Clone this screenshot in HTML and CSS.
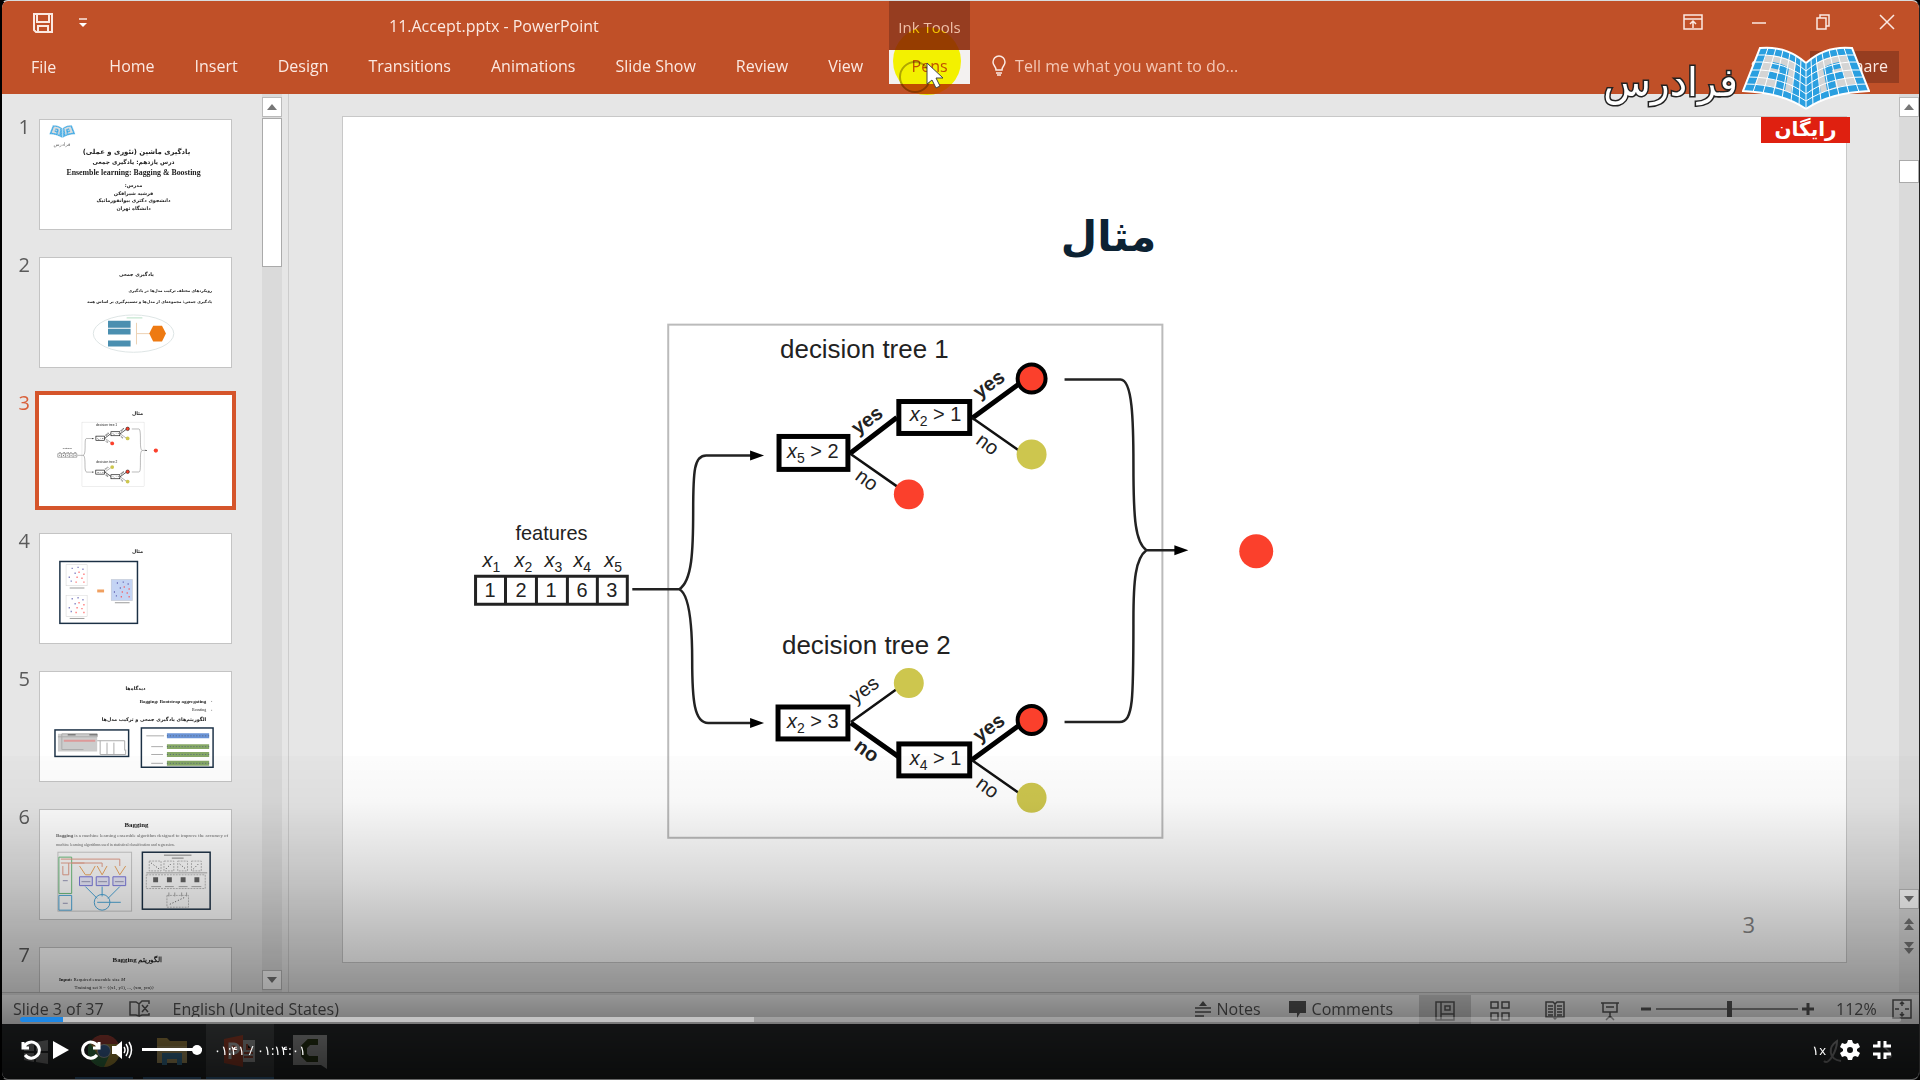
FILE: index.html
```html
<!DOCTYPE html>
<html lang="en">
<head>
<meta charset="utf-8">
<title>11.Accept.pptx - PowerPoint</title>
<link rel="stylesheet" href="styles.css">
</head>
<body>
<svg class="defs" aria-hidden="true">
  <symbol id="page" viewBox="0 0 64 66">
    <path class="pg-blue" d="M18 2C38 0 54 8 64 17V63C48 52 25 46 1 45Z"/>
    <path class="pg-grey" d="M24 9C36 9 46 12 54 17L49 47C38 42 26 39 13 38Z"/>
    <path class="pg-blue" d="M31 16C37 17 43 19 47 22L43 44L34 41L35 35L25 32L27 25L37 28L38 24L29 22Z"/>
    <path class="pg-line" d="M15 9C36 8 53 15 64 25M12 16C34 15 52 23 64 32M10 24C32 23 51 30 64 40M7 31C29 31 50 37 64 48M4 38C27 38 49 45 64 55M26 2L11 46M34 2L21 47M41 4L31 49M48 7L40 52M54 10L49 55M59 13L57 59"/>
    <path class="pg-edge" d="M64 17C54 8 38 0 18 2L1 45C25 46 48 52 64 63"/>
  </symbol>
  <symbol id="book" viewBox="0 0 128 66">
    <use href="#page" width="64" height="66"/>
    <use href="#page" width="64" height="66" transform="translate(128 0) scale(-1 1)"/>
    <path class="pg-line" d="M64 17V63"/>
  </symbol>
  <symbol id="scatter" viewBox="0 0 22 22">
    <rect class="plot" x="0" y="0" width="22" height="22"/>
    <path class="dots blue" d="M6 4h1M12 3h1M17 5h1M9 9h1M3 13h1M5 17h1"/>
    <path class="dots pink" d="M13 8h1M18 10h1M11 13h1M16 14h1M10 18h1M18 18h1"/>
  </symbol>
</svg>

<main class="player">
  <header class="ribbon">
    <div class="titlebar">
      <div class="quick">
        <button aria-label="Save"><svg width="20" height="22" viewBox="0 0 20 22"><path class="ln2" d="M1 2H19V20H3L1 18ZM4 2V10H16V2M5 20V14H15V20"/></svg></button>
        <button aria-label="Customize"><svg width="10" height="12" viewBox="0 0 10 12"><path class="ln" d="M1 2H9"/><path class="fl" d="M1 6H9L5 10Z"/></svg></button>
      </div>
      <div class="doc">11.Accept.pptx - PowerPoint</div>
      <div class="ink">Ink Tools</div>
      <div class="window">
        <button aria-label="Ribbon display"><svg width="20" height="16" viewBox="0 0 20 16"><path class="ln" d="M1 1H19V15H1ZM1 5H19M10 14V7M7 10L10 7L13 10"/></svg></button>
        <button aria-label="Minimize"><svg width="16" height="16" viewBox="0 0 16 16"><path class="ln" d="M1 9H15"/></svg></button>
        <button aria-label="Restore"><svg width="16" height="16" viewBox="0 0 16 16"><path class="ln" d="M2 4H11V15H2ZM5 4V1H14V12H11"/></svg></button>
        <button aria-label="Close"><svg width="16" height="16" viewBox="0 0 16 16"><path class="ln" d="M1 1L15 15M15 1L1 15"/></svg></button>
      </div>
    </div>
    <nav class="tabs">
      <button class="file">File</button><button>Home</button><button>Insert</button><button>Design</button><button>Transitions</button><button>Animations</button><button>Slide Show</button><button>Review</button><button>View</button>
      <div class="pens">
        <button class="active">Pens</button>
        <span class="halo"></span>
        <svg class="cursor" width="20" height="28" viewBox="0 0 20 28"><path d="M1 1V22L6 18L10 26L14 24L10 16H17Z"/></svg>
      </div>
      <button class="tell"><svg width="16" height="22" viewBox="0 0 16 22"><path class="ln" d="M5 15C5 11 2 11 2 7A6 6 0 0 1 14 7C14 11 11 11 11 15ZM5 18H11M6 20H10"/></svg>Tell me what you want to do...</button>
      <div class="account"><a href="#">Sign in</a><button class="share">Share</button></div>
    </nav>
  </header>

  <section class="workspace">
    <ol class="thumbs">
      <li><span>1</span><svg viewBox="0 0 192 111">
        <use href="#book" x="8" y="5" width="27" height="14"/>
        <text class="fa mid grey" x="21" y="26" font-size="5">فرادرس</text>
        <g class="fa mid b"><text x="97" y="35" font-size="7">یادگیری ماشین (تئوری و عملی)</text><text x="94" y="45" font-size="6">درس یازدهم: یادگیری جمعی</text></g>
        <text class="serif mid b" x="94" y="56" font-size="8">Ensemble learning: Bagging &amp; Boosting</text>
        <g class="fa mid b" font-size="5"><text x="94" y="68">مدرس:</text><text x="94" y="76">فرشید شیرافکن</text><text x="94" y="84">دانشجوی دکتری بیوانفورماتیک</text><text x="94" y="92">دانشگاه تهران</text></g>
      </svg></li>
      <li><span>2</span><svg viewBox="0 0 192 111">
        <text class="fa mid b" x="97" y="18" font-size="5">یادگیری جمعی</text>
        <text class="fa b" x="174" y="35" font-size="4">رویکردهای مختلف ترکیب مدل‌ها در یادگیری</text>
        <text class="fa b" x="174" y="46" font-size="4">یادگیری جمعی: مجموعه‌ای از مدل‌ها و تصمیم‌گیری بر اساس همه</text>
        <ellipse cx="94" cy="77" rx="41" ry="19" fill="none" stroke="#dde4e4"/>
        <path fill="#4a8fb0" d="M68 64h23v7h-23zM68 72h23v6h-23zM68 84h23v6h-23z"/>
        <path stroke="#edd0b0" fill="none" d="M97 66V88M97 77H110"/>
        <path fill="#ee7a12" d="M110 77L114 69H123L127 77L123 85H114Z"/>
        <path stroke="#b6dfc4" d="M87 61h16"/>
      </svg></li>
      <li class="current"><span>3</span><svg viewBox="0 0 192 111">
        <text class="fa mid b" x="98" y="19" font-size="5">مثال</text>
        <g transform="scale(0.1277)"><use href="#forest"/></g>
      </svg></li>
      <li><span>4</span><svg viewBox="0 0 192 111">
        <text class="fa mid b" x="98" y="19" font-size="5">مثال</text>
        <rect class="dark" x="19" y="28" width="79" height="63"/>
        <use href="#scatter" x="25" y="31" width="22" height="22"/><use href="#scatter" x="25" y="62" width="22" height="22"/>
        <rect x="71" y="46" width="22" height="22" fill="#c4d4f4"/><use href="#scatter" x="71" y="46" width="22" height="22"/>
        <path stroke="#f0a060" stroke-width="3" d="M57 58h7"/><path stroke="#999" d="M29 55h15M29 86h15M75 70h15"/>
      </svg></li>
      <li><span>5</span><svg viewBox="0 0 192 111">
        <text class="fa mid b" x="96" y="18" font-size="5">دیدگاه‌ها</text>
        <text class="serif end b" x="168" y="32" font-size="5">Bagging: Bootstrap aggregating</text>
        <text class="serif end" x="168" y="40" font-size="4">Boosting</text>
        <text class="fa b" x="168" y="50" font-size="5">الگوریتم‌های یادگیری جمعی و ترکیب مدل‌ها</text>
        <path stroke="#999" d="M173 30h1M173 39h1"/>
        <rect class="dark" x="14" y="59" width="75" height="27"/>
        <path stroke="#ccc" stroke-width="18" d="M17 72h40"/><path stroke="#d99" stroke-width="2" d="M23 70h32"/><path stroke="#aaa" fill="none" d="M17 66h40v-3h-36v16h22M57 70h28v10M60 70v14h26v-5M67 72v12M74 72v12"/><path stroke="#555" d="M27 64h8M49 64h8"/>
        <rect class="dark" x="102" y="57" width="73" height="40"/>
        <path stroke="#6a93d6" stroke-width="5" d="M128 65h43"/><path stroke="#86a866" stroke-width="5" d="M128 76h43M128 84h43M128 93h43"/>
        <path stroke="#aaa" d="M107 65h18M112 76h12M112 84h12M112 93h12"/><path stroke="#567" stroke-dasharray="1 2" d="M128 65h43M128 76h43M128 84h43M128 93h43"/>
      </svg></li>
      <li><span>6</span><svg viewBox="0 0 192 111">
        <text class="serif mid b" x="97" y="17" font-size="7">Bagging</text>
        <text class="serif grey" x="15" y="28" font-size="5"><tspan class="b">Bagging</tspan> is a machine learning ensemble algorithm designed to improve the accuracy of</text>
        <text class="serif grey" x="15" y="37" font-size="4">machine learning algorithms used in statistical classification and regression.</text>
        <rect x="17" y="43" width="75" height="60" fill="none" stroke="#ccc"/>
        <path stroke="#6cbf7c" fill="none" d="M18 48h13v37h-13z"/><path stroke="#4aa8dc" fill="none" d="M18 87h13v15h-13zM45 78L57 90M62 78V88M80 78L68 90"/><circle cx="62" cy="94" r="8" fill="none" stroke="#4aa8dc"/>
        <path stroke="#e8a08c" fill="none" d="M20 50H80V57M20 54H62V58M22 57v9h6v-12M31 54h13"/><path stroke="#f0a860" fill="none" d="M39 57l6 9h5l5-9M57 57l5 9l5-9M75 57l5 9l6-9"/>
        <path stroke="#7a78e0" stroke-width="1" fill="#eef" d="M39 68h13v9h-13zM56 68h13v9h-13zM73 68h13v9h-13z"/><path stroke="#99b" d="M41 73h9M58 73h9M75 73h9M22 72h5M22 95h5"/><path stroke="#4aa8dc" d="M57 94h24"/>
        <rect class="dark" x="103" y="43" width="69" height="58"/>
        <path stroke="#888" d="M125 46h28M133 49h12"/><path stroke="#bbb" fill="none" stroke-dasharray="2 1" d="M110 52h12v10h-12zM125 52h10v10h-10zM139 52h10v10h-10zM153 52h10v10h-10zM128 87h22v12h-22zM107 66h60v14h-60z"/>
        <path stroke="#666" stroke-width="5" stroke-dasharray="5 9" d="M114 71h50"/><path stroke="#aaa" d="M107 64h62M112 78h10M126 78h9M140 78h9M153 78h10M130 84v4M136 84v4M143 84v4M148 84v4"/>
        <path stroke="#555" stroke-dasharray="1 2" d="M112 54l8 6M127 60l6-6M141 55l6 5M155 60l6-6M131 96l15-7"/>
      </svg></li>
      <li><span>7</span><svg viewBox="0 0 192 111">
        <text class="serif mid b" x="98" y="14" font-size="7">Bagging الگوریتم</text>
        <text class="serif" x="18" y="34" font-size="5"><tspan class="b">Input:</tspan> Required ensemble size <tspan class="var">M</tspan></text>
        <text class="serif" x="34" y="42" font-size="5">Training set S = {(x1, y1), ..., (xm, ym)}</text>
      </svg></li>
    </ol>
    <div class="bar left"><i class="up"></i><b></b><i class="down"></i></div>
    <div class="canvas">
      <article class="slide">
        <h1>مثال</h1>
        <svg class="forest" viewBox="0 0 1504 846" role="img" aria-label="Two decision trees combined">
          <g id="forest"><g transform="translate(-343 -116)">
            <rect class="frame" x="668" y="324" width="495" height="514"/>
            <text class="t26" x="780" y="357">decision tree 1</text>
            <text class="t26" x="782" y="654">decision tree 2</text>
            <text class="t20" x="515" y="540">features</text>
            <g class="t20">
              <text x="482" y="567"><tspan class="var">x</tspan><tspan class="sub" dy="5">1</tspan></text>
              <text x="514" y="567"><tspan class="var">x</tspan><tspan class="sub" dy="5">2</tspan></text>
              <text x="544" y="567"><tspan class="var">x</tspan><tspan class="sub" dy="5">3</tspan></text>
              <text x="573" y="567"><tspan class="var">x</tspan><tspan class="sub" dy="5">4</tspan></text>
              <text x="604" y="567"><tspan class="var">x</tspan><tspan class="sub" dy="5">5</tspan></text>
              <text x="484" y="597">1</text><text x="515" y="597">2</text><text x="545" y="597">1</text><text x="576" y="597">6</text><text x="606" y="597">3</text>
            </g>
            <path class="cells" d="M475 576H627V604H475ZM505 576V604M536 576V604M567 576V604M597 576V604"/>
            <path class="flow" d="M632 589H679C692 581 693 550 693 510C693 470 694 455 706 455H752M679 589C689 594 692 625 692 660C692 700 694 723 708 723H752"/>
            <path class="flow" d="M1065 379H1121C1133 379 1134 420 1134 465C1134 520 1136 542 1147 550H1178M1065 722H1120C1134 722 1134 700 1134 620C1134 580 1136 558 1147 550"/>
            <path d="M750 450L764 455L750 460ZM750 718L764 723L750 728ZM1175 545L1189 550L1175 555Z"/>
            <path class="thick" d="M850 453L897 417M972 418L1020 383M851 723L899 757M972 760L1020 725"/>
            <path class="thin" d="M850 453L900 488M972 417L1022 452M851 722L897 689M972 760L1022 795"/>
            <rect class="box" x="779" y="436" width="69" height="33"/>
            <rect class="box" x="899" y="401" width="71" height="32"/>
            <rect class="box" x="778" y="707" width="70" height="32"/>
            <rect class="box" x="899" y="744" width="71" height="32"/>
            <g class="t20">
              <text x="787" y="458"><tspan class="var">x</tspan><tspan class="sub" dy="5">5</tspan><tspan dy="-5"> &gt; 2</tspan></text>
              <text x="910" y="421"><tspan class="var">x</tspan><tspan class="sub" dy="5">2</tspan><tspan dy="-5"> &gt; 1</tspan></text>
              <text x="787" y="728"><tspan class="var">x</tspan><tspan class="sub" dy="5">2</tspan><tspan dy="-5"> &gt; 3</tspan></text>
              <text x="910" y="765"><tspan class="var">x</tspan><tspan class="sub" dy="5">4</tspan><tspan dy="-5"> &gt; 1</tspan></text>
            </g>
            <g class="t20 mid">
              <text class="b" transform="translate(871 425) rotate(-36)">yes</text>
              <text class="b" transform="translate(993 389) rotate(-36)">yes</text>
              <text transform="translate(863 485) rotate(36)">no</text>
              <text transform="translate(984 449) rotate(36)">no</text>
              <text transform="translate(868 695) rotate(-36)">yes</text>
              <text class="b" transform="translate(863 756) rotate(36)">no</text>
              <text class="b" transform="translate(993 733) rotate(-36)">yes</text>
              <text transform="translate(984 793) rotate(36)">no</text>
            </g>
            <circle class="red ring" cx="1032" cy="378" r="14"/>
            <circle class="red ring" cx="1032" cy="720" r="14"/>
            <circle class="olive" cx="1032" cy="454" r="15"/>
            <circle class="olive" cx="1032" cy="798" r="15"/>
            <circle class="olive" cx="909" cy="683" r="15"/>
            <circle class="red" cx="909" cy="494" r="15"/>
            <circle class="red" cx="1257" cy="551" r="17"/>
          </g></g>
        </svg>
        <p>3</p>
      </article>
    </div>
    <div class="bar right"><i class="up"></i><b></b><i class="down"></i>
      <svg width="16" height="14" viewBox="0 0 16 14"><path d="M3 7L8 1L13 7ZM3 13L8 7L13 13Z"/></svg>
      <svg width="16" height="14" viewBox="0 0 16 14"><path d="M3 1L8 7L13 1ZM3 7L8 13L13 7Z"/></svg>
    </div>
  </section>

  <footer class="status">
    <span>Slide 3 of 37</span>
    <svg width="22" height="18" viewBox="0 0 22 18"><path d="M1 2H7L10 4V16L7 15H1ZM10 4L13 1H20V4M10 16L13 15H20V13M13 5L19 12M19 5L13 12"/></svg>
    <span class="lang">English (United States)</span>
    <button class="notes"><svg width="16" height="18" viewBox="0 0 16 18"><path class="solid" d="M4 6L8 1L12 6Z"/><path d="M0 8H16M0 12H16M0 16H9"/></svg>Notes</button>
    <button class="comments"><svg width="18" height="18" viewBox="0 0 18 18"><path class="solid" d="M0 1H17V13H11L8 18V13H0Z"/></svg>Comments</button>
    <div class="views">
      <button class="on" aria-label="Normal"><svg width="20" height="20" viewBox="0 0 20 20"><path d="M1 1H19V19H1ZM6 1V19M6 13H19M10 5H15V9H10Z"/></svg></button>
      <button aria-label="Slide sorter"><svg width="20" height="20" viewBox="0 0 20 20"><path d="M1 1H8V7H1ZM12 1H19V7H12ZM1 12H8V19H1ZM12 12H19V19H12Z"/></svg></button>
      <button aria-label="Reading view"><svg width="20" height="20" viewBox="0 0 20 20"><path d="M10 3L8 1H1V16H8L10 18L12 16H19V1H12ZM10 3V18M3 5H8M3 8H8M3 11H8M3 14H8M12 5H17M12 8H17M12 11H17M12 14H17"/></svg></button>
      <button aria-label="Slide show"><svg width="20" height="20" viewBox="0 0 20 20"><path d="M1 2H19M3 2V11H17V2M6 6H14M10 11V17M6 19L10 15L14 19"/></svg></button>
    </div>
    <div class="zoom">
      <button aria-label="Zoom out"><svg width="12" height="12" viewBox="0 0 12 12"><path class="heavy" d="M1 6H11"/></svg></button>
      <input type="range" aria-label="Zoom" min="0" max="100" value="52">
      <button aria-label="Zoom in"><svg width="12" height="12" viewBox="0 0 12 12"><path class="heavy" d="M0 6H12M6 0V12"/></svg></button>
      <span>112%</span>
      <button aria-label="Fit"><svg width="20" height="20" viewBox="0 0 20 20"><path d="M6 1H1V19H6M14 1H19V19H14M6 1H14M6 19H14M10 3V7M10 13V17M3 10H7M13 10H17M8 5L10 3L12 5M8 15L10 17L12 15"/></svg></button>
    </div>
  </footer>

  <div class="taskbar">
    <span class="win"><svg width="24" height="24" viewBox="0 0 24 24"><path fill="#999" d="M0 4L10 2V11H0ZM12 2L24 0V11H12ZM0 13H10V22L0 20ZM12 13H24V24L12 22Z"/></svg></span>
    <span class="run"><svg width="32" height="32" viewBox="0 0 32 32"><circle cx="16" cy="16" r="16" fill="#d6b440"/><path fill="#c0443a" d="M16 16L2 8A16 16 0 0 1 30 8L30 9H16Z"/><path fill="#3f9a56" d="M2 8A16 16 0 0 0 16 32L22 19L10 20Z"/><circle cx="16" cy="16" r="7" fill="#ddd"/><circle cx="16" cy="16" r="6" fill="#4b83cf"/></svg></span>
    <span class="run"><svg width="32" height="28" viewBox="0 0 32 28"><path fill="#c8a650" d="M1 1H11L14 4H31V26H1Z"/><path fill="#e2c67c" d="M1 9H31V26H1Z"/><path fill="#4899c8" d="M6 16H26V28H21V22H11V28H6Z"/></svg></span>
    <span class="run sel"><svg width="32" height="32" viewBox="0 0 32 32"><path fill="#c9c9c9" d="M17 5H31V27H17Z"/><path stroke="#b94a30" stroke-width="2" d="M20 18H29M20 22H29M23 9V14H28"/><path fill="#c34a2c" d="M0 4L19 0V32L0 28Z"/><path fill="none" stroke="#eee" stroke-width="3" d="M6 24V9H10A4 4 0 0 1 10 18H6"/></svg></span>
    <span class="cam"><svg width="34" height="34" viewBox="0 0 34 34"><path fill="#bbb" d="M0 0H34V34L28 30H0Z"/><path fill="none" stroke="#2b3b10" stroke-width="6" d="M25 7H16L11 12V20L15 24H25"/></svg></span>
    <span class="tray"><svg width="76" height="28" viewBox="0 0 76 28"><path d="M1 23C6 28 14 12 14 3C5 9 5 21 18 23M60 8C70 16 72 20 60 20"/></svg></span>
  </div>

  <div class="watermark">
    <div class="brand"><span>فرادرس</span><svg width="128" height="66" viewBox="0 0 128 66"><use href="#book" width="128" height="66"/></svg></div>
    <strong>رایگان</strong>
  </div>

  <div class="shade"></div>
  <div class="controls">
    <input class="seek" type="range" aria-label="Seek" min="0" max="4441" value="101">
    <div class="row">
      <button aria-label="Back"><svg width="20" height="20" viewBox="0 0 20 20"><path class="w" d="M2 2V8H8M3 7A8 8 0 1 1 4 15"/></svg></button>
      <button class="play" aria-label="Play"><svg width="18" height="20" viewBox="0 0 18 20"><path class="fl" d="M1 1L17 10L1 19Z"/></svg></button>
      <button aria-label="Forward"><svg width="20" height="20" viewBox="0 0 20 20"><path class="w" d="M18 2V8H12M17 7A8 8 0 1 0 16 15"/></svg></button>
      <button class="mute" aria-label="Mute"><svg width="22" height="20" viewBox="0 0 22 20"><path class="fl" d="M0 6H4L10 1V19L4 14H0Z"/><path class="w2" d="M12 7Q14 10 12 13M14 4Q18 10 14 16M17 2Q22 10 17 18"/></svg></button>
      <input class="volume" type="range" aria-label="Volume" value="100">
      <span class="time">۰۱:۴۱ / ۰۱:۱۴:۰۱</span>
      <span class="rate">۱x</span>
      <button class="gear" aria-label="Settings"><svg width="20" height="20" viewBox="0 0 20 20"><path class="fl" fill-rule="evenodd" d="M8 0H12L13 3L15 4L18 3L20 7L17 9V11L20 13L18 17L15 16L13 17L12 20H8L7 17L5 16L2 17L0 13L3 11V9L0 7L2 3L5 4L7 3ZM10 7A3 3 0 1 0 10 13A3 3 0 1 0 10 7Z"/></svg></button>
      <button aria-label="Exit full screen"><svg width="20" height="20" viewBox="0 0 20 20"><path class="w" d="M1 6H7V1M13 1V6H19M1 14H7V19M13 19V14H19"/></svg></button>
    </div>
  </div>
</main>
</body>
</html>
```
FILE: styles.css
```css
* { box-sizing: border-box; }
body { margin: 0; background: #000; font-family: "Open Sans", "Noto Sans", sans-serif; font-size: 16px; }
button { display: flex; align-items: center; justify-content: center; padding: 0; border: 0; background: none; color: inherit; font: inherit; white-space: nowrap; }
svg { display: block; flex: none; }
input[type="range"] { appearance: none; margin: 0; background: none; }
.defs { position: absolute; width: 0; height: 0; }

.player { position: relative; display: flex; flex-direction: column; height: 100vh; min-height: 600px; border: 1px solid #666; border-top-color: #d8dcde; border-right-color: #222; border-left: 2px solid #000; border-radius: 8px; overflow: hidden; background: #e6e6e6; }

/* ribbon */
.ribbon { flex: none; background: #c05028; color: #fbe9e2; }
.titlebar { display: flex; height: 49px; }
.quick { display: flex; align-items: center; gap: 25px; width: 387px; padding: 0 0 6px 31px; }
.doc { width: 500px; padding-top: 14px; line-height: 22px; }
.ink { width: 81px; padding-top: 16px; background: #963d20; color: #f0c0a8; text-align: center; font-size: 15px; line-height: 20px; }
.window { display: flex; align-items: center; gap: 48px; margin-left: auto; padding: 0 24px 8px 0; }
.ln { fill: none; stroke: #fbe9e2; stroke-width: 1.5; }
.ln2 { fill: none; stroke: #fbe9e2; stroke-width: 2; }
.fl { fill: #fff; }
.tabs { display: flex; height: 44px; padding-bottom: 10px; }
.tabs button { padding: 0 20px 2px; }
.tabs .file { padding: 0 33px 0 29px; }
.pens { position: relative; width: 81px; margin-left: 6px; }
.tabs .active { width: 100%; height: 34px; background: #f3f1f0; color: #c05028; }
.halo { position: absolute; left: 4px; top: -23px; width: 68px; height: 68px; border-radius: 50%; background: #ff0; mix-blend-mode: multiply; }
.halo::after { content: ""; position: absolute; left: 6px; top: 34px; width: 28px; height: 28px; border: 2px solid #b8b000; border-radius: 50%; }
.cursor { position: absolute; left: 37px; top: 12px; fill: #fff; stroke: #444; }
.tabs .tell { gap: 8px; padding: 0 21px 2px; color: #f4c8b6; }
.account { display: flex; align-items: center; margin-left: auto; padding-right: 20px; gap: 10px; }
.account a { color: inherit; text-decoration: none; }
.tabs .share { width: 89px; height: 32px; padding: 0 11px 2px; justify-content: flex-end; background: #963d20; }

/* workspace */
.workspace { display: flex; flex: 1; min-height: 0; border-bottom: 1px solid #bbb; }
.thumbs { display: flex; flex-direction: column; gap: 27px; width: 260px; margin: 0; padding: 25px 30px 0 0; list-style: none; overflow: hidden; color: #5a5a5a; font-size: 20px; line-height: 26px; }
.thumbs li { display: flex; gap: 9px; justify-content: flex-end; }
.thumbs span { margin-top: -5px; }
.thumbs svg { width: 193px; height: 111px; border: 1px solid #c4c4c4; background: #fff; }
.current { color: #d9603a; }
.thumbs .current svg { outline: 4px solid #d5552b; border-color: #fff; }
.bar { display: flex; flex-direction: column; flex: none; width: 20px; padding-top: 3px; background: #dadada; }
.bar i { display: flex; align-items: center; justify-content: center; height: 20px; border: 1px solid #bbb; background: #fff; }
.bar i::after { content: ""; border: 5px solid transparent; border-top-width: 0; border-bottom: 6px solid #777; }
.bar .down::after { border-top: 6px solid #777; border-bottom-width: 0; }
.bar b { border: 1px solid #aaa; background: #fff; }
.left b { height: 149px; margin-top: 1px; }
.left .down, .right .down { margin-top: auto; }
.left { padding-bottom: 2px; }
.right { padding-bottom: 35px; }
.right b { height: 23px; margin-top: 43px; }
.right svg { margin: 8px 0 2px 2px; fill: #777; }
.canvas { flex: 1; min-width: 0; margin-left: 6px; padding: 22px 52px 0 53px; border-left: 1px solid #ccc; }
.slide { position: relative; aspect-ratio: 1504 / 846; border: 1px solid #c8c8c8; background: #fff; }
.slide h1 { margin: 0; padding: 84px 0 0 28px; text-align: center; color: #0c2233; font: bold 42px/72px "DejaVu Sans", sans-serif; }
.slide p { position: absolute; right: 91px; bottom: 22px; margin: 0; color: #888; font-size: 22px; line-height: 32px; }
.forest { position: absolute; inset: 0; width: 100%; height: 100%; }

/* drawings */
text { font-family: "Liberation Sans", Arial, sans-serif; fill: #222; }
.t26 { font-size: 26px; }
.t20 { font-size: 20px; }
.var { font-style: italic; }
.sub { font-size: 14px; }
.b { font-weight: bold; }
.mid { text-anchor: middle; }
.end { text-anchor: end; }
.fa, .fa text { direction: rtl; font-family: "DejaVu Sans", sans-serif; }
.serif { font-family: "Liberation Serif", serif; }
.grey { fill: #666; }
.frame { fill: none; stroke: #bbb; stroke-width: 2; }
.cells { fill: none; stroke: #222; stroke-width: 3; }
.flow { fill: none; stroke: #222; stroke-width: 2.5; }
.thick { stroke: #000; stroke-width: 5; }
.thin { stroke: #111; stroke-width: 2.5; }
.box { fill: #fff; stroke: #000; stroke-width: 5; }
.red { fill: #fb402c; }
.ring { stroke: #000; stroke-width: 4; }
.olive { fill: #cdc64e; }
.dark { fill: none; stroke: #1b3045; stroke-width: 1.5; }
.plot { fill: none; stroke: #ccc; }
.dots { stroke-width: 1.5; }
.blue { stroke: #55a; }
.pink { stroke: #f44; }
.pg-blue { fill: #2a9fe0; }
.pg-grey { fill: #d4d4d4; }
.pg-line { fill: none; stroke: #fff; stroke-width: 1; }
.pg-edge { fill: none; stroke: #fff; stroke-width: 2; }

/* status bar */
.status { display: flex; align-items: center; flex: none; height: 31px; padding: 0 7px 2px 11px; border-top: 2px solid #ddd; background: #f0f0f0; color: #555; }
.status > svg { margin: 0 22px 0 25px; }
.status path { fill: none; stroke: #555; stroke-width: 1.5; }
.status .solid { fill: #555; stroke: none; }
.status .heavy { stroke-width: 3; }
.notes { gap: 6px; margin-left: auto; }
.comments { gap: 5px; margin: 0 26px 0 28px; }
.views { display: flex; gap: 3px; align-self: stretch; }
.views button { width: 52px; height: 31px; }
.views .on { background: #c8c8c8; }
.zoom { display: flex; align-items: center; gap: 4px; margin-left: 4px; }
.zoom input { width: 142px; height: 16px; background: linear-gradient(#888, #888) center / 100% 2px no-repeat; }
.zoom input::-webkit-slider-thumb { appearance: none; width: 5px; height: 16px; background: #555; }
.zoom span { width: 40px; margin: 0 12px 0 18px; }

/* taskbar */
.taskbar { display: flex; align-items: center; flex: none; height: 55px; background: #26292a; }
.taskbar span { display: flex; align-items: center; justify-content: center; height: 55px; opacity: 0.75; }
.win { width: 68px; }
.run { width: 58px; margin: 0 5px; border-bottom: 2px solid #4a90d0; }
.taskbar .sel { width: 68px; margin: 0; background: #4c4f50; }
.taskbar .cam { width: 70px; padding-left: 2px; }
.taskbar .tray { margin-left: auto; padding-right: 20px; fill: none; stroke: #aaa; stroke-width: 2; }

/* watermark */
.watermark { position: absolute; top: 45px; right: 49px; display: flex; flex-direction: column; align-items: flex-end; }
.brand { display: flex; align-items: flex-start; gap: 4px; }
.brand span { padding-top: 8px; color: #fff; font: 39px/58px "DejaVu Sans", sans-serif; -webkit-text-stroke: 3px #222; paint-order: stroke; }
.watermark strong { width: 89px; height: 26px; margin: 5px 20px 0 0; background: #df2010; color: #fff; text-align: center; font: bold 20px/24px "DejaVu Sans", sans-serif; }

/* player controls */
.shade { position: absolute; inset: 70% 0 0 0; background: linear-gradient(rgba(0,0,0,0.01), rgba(0,0,0,0.03) 14%, rgba(0,0,0,0.15) 38%, rgba(0,0,0,0.31) 64%, rgba(0,0,0,0.38) 74%, rgba(0,0,0,0.7)); }
.controls { position: absolute; inset: auto 0 0 0; color: #fff; }
.seek { display: block; width: calc(100% - 36px); height: 5px; margin: 0 18px !important; border-radius: 3px; background: linear-gradient(90deg, #1e88e5 2.3%, #c4c4c4 2.3%, #c4c4c4 39%, rgba(255,255,255,0.25) 39%) !important; }
.seek::-webkit-slider-thumb { appearance: none; width: 1px; height: 1px; }
.row { display: flex; align-items: center; height: 57px; padding: 0 27px 2px 19px; }
.w { fill: none; stroke: #fff; stroke-width: 3; }
.w2 { fill: none; stroke: #fff; stroke-width: 1.5; }
.play { margin: 0 11px; }
.mute { margin: 0 8px 0 11px; }
.volume { width: 60px; height: 10px; background: linear-gradient(#fff, #fff) center / 100% 3px no-repeat !important; }
.volume::-webkit-slider-thumb { appearance: none; width: 10px; height: 10px; border-radius: 50%; background: #fff; }
.time { margin-left: 12px; font-size: 13px; }
.rate { margin-left: auto; font-size: 13px; }
.gear { margin: 0 12px 0 14px; }
```
